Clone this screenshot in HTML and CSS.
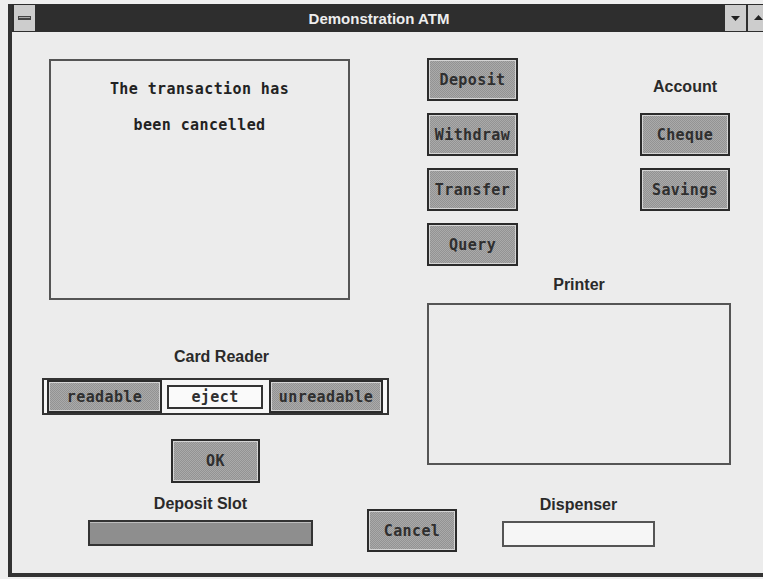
FILE: index.html
```html
<!DOCTYPE html>
<html lang="en">
<head>
    <meta charset="UTF-8">
    <meta name="viewport" content="width=device-width, initial-scale=1.0">
    <title>Demonstration ATM</title>
    <link rel="stylesheet" href="styles.css">
</head>
<body>
    <div class="window">
        <div class="titlebar">
            <div class="sysbox">
                <svg width="21" height="26" viewBox="0 0 21 26">
                    <rect x="4" y="11" width="13" height="4" fill="#444"/>
                    <rect x="5" y="12" width="11" height="1" fill="#aaa"/>
                </svg>
            </div>
            <div class="title">Demonstration ATM</div>
            <div class="sysbox">
                <svg width="21" height="26" viewBox="0 0 21 26">
                    <polygon points="6,11 15,11 10.5,16" fill="#222"/>
                </svg>
            </div>
            <div class="sysbox last">
                <svg width="21" height="26" viewBox="0 0 21 26">
                    <polygon points="6,15 15,15 10.5,10" fill="#222"/>
                </svg>
            </div>
        </div>

        <div class="content">
            <div class="top">
                <div class="left">
                    <div class="screen" id="screen">
                        <div>The transaction has</div>
                        <div>been cancelled</div>
                    </div>

                    <div class="card-reader">
                        <div class="label shifted">Card Reader</div>
                        <div class="reader-group">
                            <button class="btn readable">readable</button>
                            <div class="eject">eject</div>
                            <button class="btn unreadable">unreadable</button>
                        </div>
                    </div>

                    <button class="btn ok">OK</button>
                </div>

                <div class="right">
                    <div class="choices">
                        <div class="transactions">
                            <button class="btn">Deposit</button>
                            <button class="btn">Withdraw</button>
                            <button class="btn">Transfer</button>
                            <button class="btn">Query</button>
                        </div>
                        <div class="account">
                            <div class="label">Account</div>
                            <button class="btn">Cheque</button>
                            <button class="btn">Savings</button>
                        </div>
                    </div>

                    <div class="printer">
                        <div class="label">Printer</div>
                        <div class="paper"></div>
                    </div>
                </div>
            </div>

            <div class="bottom">
                <div class="slot">
                    <div class="label">Deposit Slot</div>
                    <div class="slot-bar"></div>
                </div>
                <button class="btn cancel">Cancel</button>
                <div class="dispenser">
                    <div class="label">Dispenser</div>
                    <div class="dispenser-box"></div>
                </div>
            </div>
        </div>
    </div>
</body>
</html>
```

FILE: styles.css
```css
html, body {
    overflow: hidden;
}
body {
    margin: 0;
    background-color: #efefef;
    font-family: "Liberation Sans", Arial, sans-serif;
}
.window {
    margin: 4px 0 0 8px;
    width: 770px;
    border-left: 4px solid #333;
    border-bottom: 4px solid #333;
    background-color: #ececec;
}
.titlebar {
    height: 28px;
    display: flex;
    align-items: center;
    background-color: #2e2e2e;
}
.sysbox {
    width: 21px;
    height: 26px;
    margin-left: 2px;
    background-color: #cdcdcd;
}
.sysbox svg {
    display: block;
}
.sysbox.last {
    margin-right: 13px;
}
.title {
    flex: 1;
    text-align: center;
    color: #ededed;
    font-weight: bold;
    font-size: 15px;
}
.content {
    height: 541px;
}
.top {
    display: flex;
    height: 451px;
}
.left {
    width: 388px;
}
.label {
    line-height: 18px;
    font-size: 16px;
    font-weight: bold;
    text-align: center;
    color: #2a2a2a;
}
.btn {
    box-sizing: border-box;
    display: block;
    width: 91px;
    height: 43px;
    padding: 0;
    border: 2px solid #2b2b2b;
    box-shadow: inset 0 0 0 1px #d4d4d4;
    background-color: #9e9e9e;
    background-image: repeating-conic-gradient(#939393 0 25%, #aaaaaa 0 50%);
    background-size: 2px 2px;
    font-family: "DejaVu Sans Mono", "Liberation Mono", monospace;
    font-weight: bold;
    font-size: 15px;
    letter-spacing: 0.4px;
    color: #2f2f2f;
    cursor: pointer;
}
.screen {
    box-sizing: border-box;
    margin: 27px 0 0 37px;
    width: 301px;
    height: 241px;
    padding-top: 10px;
    border: 2px solid #555;
    text-align: center;
    line-height: 36px;
    font-family: "DejaVu Sans Mono", "Liberation Mono", monospace;
    font-weight: bold;
    font-size: 15px;
    letter-spacing: 0.4px;
    color: #222;
}
.card-reader {
    margin: 48px 0 0 30px;
    width: 347px;
}
.shifted {
    padding-left: 12px;
    margin-bottom: 12px;
}
.reader-group {
    display: flex;
    align-items: center;
    height: 33px;
    padding: 0 4px 0 3px;
    border: 2px solid #333;
    background-color: #f6f6f6;
}
.reader-group .btn {
    height: 33px;
}
.readable {
    width: 115px;
}
.unreadable {
    width: 114px;
}
.eject {
    box-sizing: border-box;
    width: 96px;
    height: 24px;
    margin: 0 6px 0 5px;
    border: 2px solid #333;
    background-color: #fafafa;
    text-align: center;
    line-height: 20px;
    font-family: "DejaVu Sans Mono", "Liberation Mono", monospace;
    font-weight: bold;
    font-size: 15px;
    letter-spacing: 0.4px;
    color: #2f2f2f;
}
.ok {
    margin: 24px 0 0 159px;
    width: 89px;
    height: 44px;
}
.right {
    flex: 1;
}
.choices {
    display: flex;
}
.transactions {
    margin: 26px 0 0 27px;
    display: flex;
    flex-direction: column;
    gap: 12px;
}
.account {
    margin: 46px 0 0 122px;
    width: 90px;
}
.account .btn {
    width: 90px;
    margin-bottom: 12px;
}
.account .label {
    margin-bottom: 17px;
}
.printer {
    margin: 10px 0 0 27px;
    width: 304px;
}
.printer .label {
    margin-bottom: 9px;
}
.paper {
    box-sizing: border-box;
    height: 162px;
    border: 2px solid #555;
}
.bottom {
    display: flex;
    align-items: flex-start;
}
.slot {
    margin: 12px 0 0 76px;
    width: 225px;
}
.slot .label,
.dispenser .label {
    margin-bottom: 7px;
}
.slot-bar {
    box-sizing: border-box;
    height: 26px;
    border: 2px solid #333;
    box-shadow: inset 0 1px 0 #bdbdbd;
    background-color: #8e8e8e;
}
.cancel {
    margin: 26px 0 0 54px;
    width: 90px;
}
.dispenser {
    margin: 13px 0 0 45px;
    width: 153px;
}
.dispenser-box {
    box-sizing: border-box;
    height: 26px;
    border: 2px solid #555;
    background-color: #f6f6f6;
}
```
